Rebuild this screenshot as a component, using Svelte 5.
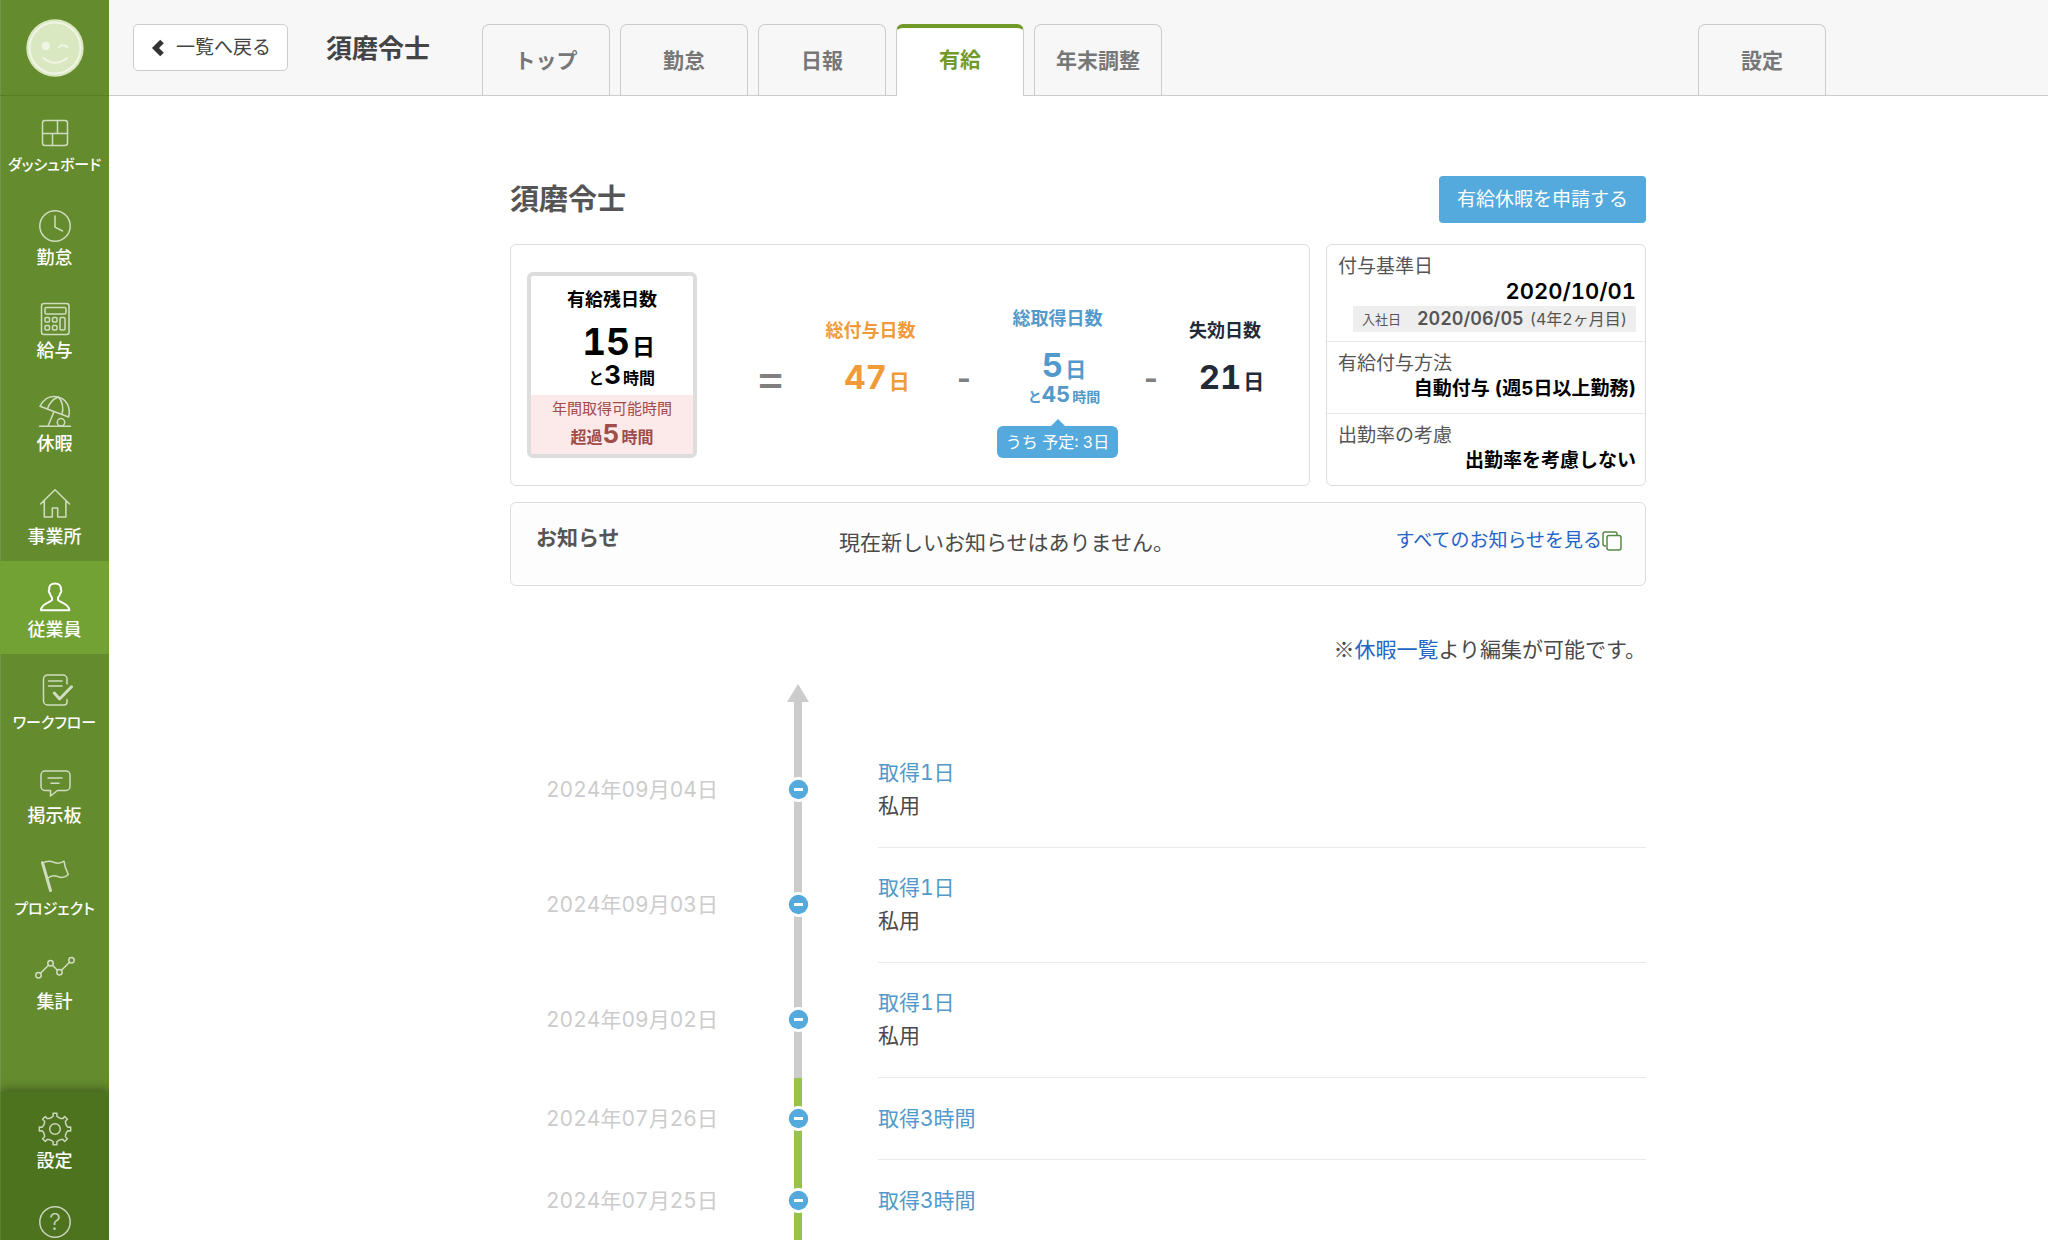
<script>
  const menu = [
    { id: 'dashboard', label: 'ダッシュボード', kana: true },
    { id: 'clock', label: '勤怠' },
    { id: 'calculator', label: '給与' },
    { id: 'parasol', label: '休暇' },
    { id: 'house', label: '事業所' },
    { id: 'person', label: '従業員', active: true },
    { id: 'workflow', label: 'ワークフロー', kana: true },
    { id: 'board', label: '掲示板' },
    { id: 'flag', label: 'プロジェクト', kana: true },
    { id: 'chart', label: '集計' }
  ];

  const tabs = [
    { label: 'トップ' },
    { label: '勤怠' },
    { label: '日報' },
    { label: '有給', active: true },
    { label: '年末調整' }
  ];

  const history = [
    { date: '2024年09月04日', text: '取得1日', note: '私用', tone: 'past' },
    { date: '2024年09月03日', text: '取得1日', note: '私用', tone: 'past' },
    { date: '2024年09月02日', text: '取得1日', note: '私用', tone: 'past' },
    { date: '2024年07月26日', text: '取得3時間', note: '', tone: 'current' },
    { date: '2024年07月25日', text: '取得3時間', note: '', tone: 'current' }
  ];

  // Outline of an eight-toothed gear centred on (20, 20).
  function gearPath() {
    const steps = [[-17, 12], [-8, 13], [-7, 15.8], [7, 15.8], [8, 13], [17, 12]];
    const points = [];
    for (let tooth = 0; tooth < 8; tooth++) {
      for (const [offset, radius] of steps) {
        const angle = ((tooth * 45 + offset) * Math.PI) / 180;
        points.push(`${(20 + radius * Math.sin(angle)).toFixed(2)} ${(20 - radius * Math.cos(angle)).toFixed(2)}`);
      }
    }
    return `M${points.join('L')}Z`;
  }
</script>

{#snippet icon(id)}
  <svg class="icon" viewBox="0 0 40 40" aria-hidden="true">
    {#if id === 'dashboard'}
      <rect x="7.5" y="7.5" width="25" height="25" rx="2.5" />
      <path d="M7.5 20.5H32.5M22.5 7.5V20.5M17.5 20.5V32.5" />
    {:else if id === 'clock'}
      <circle cx="20" cy="20" r="15.2" />
      <path d="M20 10V21.2L27.5 25" />
    {:else if id === 'calculator'}
      <rect x="6.5" y="4.5" width="27.5" height="31" rx="2.5" />
      <rect x="10" y="8.5" width="21" height="6.5" rx="1.5" />
      <rect x="10" y="18.5" width="4.5" height="4.5" rx="1" />
      <rect x="17.5" y="18.5" width="4.5" height="4.5" rx="1" />
      <rect x="10" y="26.5" width="4.5" height="4.5" rx="1" />
      <rect x="17.5" y="26.5" width="4.5" height="4.5" rx="1" />
      <rect x="25" y="18.5" width="5" height="12.5" rx="1" />
    {:else if id === 'parasol'}
      <path d="M5 14.3C9 6.5 15.5 3.2 23 5C32 7.2 36 16 33.6 25L5 14.3Z" />
      <path d="M23 5C18 7.3 14 11.5 12.5 17M23 5C27.5 8.5 28.8 16 27 22.4M19 19.6L13 34M4.5 34.3H35.5" />
      <circle cx="26" cy="30.3" r="3.7" />
    {:else if id === 'house'}
      <path d="M5.5 19L20 4.8L34.5 19M9.3 15.8V32H17.3V23H22.7V32H30.9V15.8" />
    {:else if id === 'person'}
      <path d="M20 5.5C15.6 5.5 14 8 14.2 11.5C13.4 12.5 13.8 14.8 14.9 15.4C15.3 17.5 16 18.6 17 19.6V22C15.5 24.6 6 25.3 6 32.2H34.3C34.3 25.3 24.6 24.6 23 22V19.6C24.1 18.6 24.8 17.5 25.2 15.4C26.3 14.8 26.7 12.5 25.9 11.5C26.1 8 24.4 5.5 20 5.5Z" />
    {:else if id === 'workflow'}
      <path d="M32 13V8a4 4 0 0 0-4-4H12.5a4 4 0 0 0-4 4V30a4 4 0 0 0 4 4H29a3 3 0 0 0 3-3V28.5M13.5 10H27M13.5 15H27" />
      <path class="thick" d="M19.3 22L24.6 28L36.5 15.8" />
    {:else if id === 'board'}
      <path d="M10 7H31a4 4 0 0 1 4 4V22.5a4 4 0 0 1-4 4H22.5L15.5 32V26.5H10a4 4 0 0 1-4-4V11a4 4 0 0 1 4-4ZM13 14H27M16 19.3H24" />
    {:else if id === 'flag'}
      <path d="M8 6C12 3 16 4 19.5 5.5C23 7 27 5.5 29 4.2C29.5 9 31.5 14 33.3 17.5C30.5 20.5 27 21.3 22.5 19.5C19 18 15.5 18.8 13 21" />
      <path class="thick" d="M7.5 5.8L15.5 33.5" />
    {:else if id === 'chart'}
      <path d="M5.5 23.3L13.5 15.3M17.5 15.3L22.5 20.3M26.5 20.3L34.5 12.3" />
      <circle cx="3.5" cy="25.3" r="2.7" />
      <circle cx="15.5" cy="13.3" r="2.7" />
      <circle cx="24.5" cy="22.3" r="2.7" />
      <circle cx="36.5" cy="10.3" r="2.7" />
    {:else if id === 'gear'}
      <path d={gearPath()} />
      <circle cx="20" cy="20" r="5.3" />
    {:else if id === 'help'}
      <circle cx="20" cy="20" r="15.2" />
      <text x="20" y="28" text-anchor="middle">?</text>
    {/if}
  </svg>
{/snippet}

<div class="shell">
  <nav class="sidebar" aria-label="メインメニュー">
    <a class="avatar" href="#profile" aria-label="プロフィール">
      <svg viewBox="0 0 58 58" aria-hidden="true">
        <circle cx="29" cy="29" r="28.7" fill="#dae8c1" />
        <circle cx="29" cy="29" r="25.5" fill="none" stroke="#f0f5e6" stroke-width="2" />
        <circle cx="19.8" cy="27" r="4.2" fill="#f0f5e6" />
        <path d="M33 28Q37 24.5 41.5 28M17.5 39Q29 48.5 41 39" fill="none" stroke="#f0f5e6" stroke-width="2" stroke-linecap="round" />
      </svg>
    </a>
    <div class="menu">
      {#each menu as item}
        <a class="item" class:active={item.active} class:kana={item.kana} href="#{item.id}">
          {@render icon(item.id)}
          <span>{item.label}</span>
        </a>
      {/each}
    </div>
    <div class="menu lower">
      <a class="item" href="#settings">
        {@render icon('gear')}
        <span>設定</span>
      </a>
      <a class="item" href="#help" aria-label="ヘルプ">
        {@render icon('help')}
      </a>
    </div>
  </nav>

  <div class="page">
    <header>
      <div class="bar">
        <button class="back" type="button">
          <svg viewBox="0 0 14 18" aria-hidden="true"><path d="M11 2.5L4.5 9L11 15.5" /></svg>
          一覧へ戻る
        </button>
        <strong class="who">須磨令士</strong>
        <nav class="tabs" aria-label="従業員メニュー">
          {#each tabs as tab}
            <a class="tab" class:active={tab.active} href="#{tab.label}">{tab.label}</a>
          {/each}
          <a class="tab last" href="#config">設定</a>
        </nav>
      </div>
    </header>

    <main>
      <div class="heading">
        <h1>須磨令士</h1>
        <button class="apply" type="button">有給休暇を申請する</button>
      </div>

      <div class="cards">
        <section class="card balance">
          <div class="remain">
            <h2>有給残日数</h2>
            <div class="figures">
              <p class="days"><b>15</b>日</p>
              <p class="hours">と<b>3</b>時間</p>
            </div>
            <div class="over">
              <p>年間取得可能時間</p>
              <p class="hours">超過<b>5</b>時間</p>
            </div>
          </div>
          <span class="sign equals">=</span>
          <div class="term granted">
            <h2>総付与日数</h2>
            <p class="amount"><b>47</b>日</p>
          </div>
          <span class="sign">-</span>
          <div class="term taken">
            <h2>総取得日数</h2>
            <p class="amount"><b>5</b>日</p>
            <p class="extra">と<b>45</b>時間</p>
            <p class="planned">うち 予定: 3日</p>
          </div>
          <span class="sign">-</span>
          <div class="term expired">
            <h2>失効日数</h2>
            <p class="amount"><b>21</b>日</p>
          </div>
        </section>

        <dl class="card rules">
          <div>
            <dt>付与基準日</dt>
            <dd class="base">2020/10/01</dd>
            <dd class="joined"><small>入社日</small><b>2020/06/05</b><span>(4年2ヶ月目)</span></dd>
          </div>
          <div>
            <dt>有給付与方法</dt>
            <dd>自動付与 (週5日以上勤務)</dd>
          </div>
          <div>
            <dt>出勤率の考慮</dt>
            <dd>出勤率を考慮しない</dd>
          </div>
        </dl>
      </div>

      <section class="card notice">
        <h2>お知らせ</h2>
        <p>現在新しいお知らせはありません。</p>
        <a href="#notices">
          すべてのお知らせを見る<svg viewBox="0 0 20 20" aria-hidden="true">
            <path d="M4 15H3a2 2 0 0 1-2-2V3a2 2 0 0 1 2-2H13a2 2 0 0 1 2 2V4" />
            <rect x="5" y="4.5" width="14" height="14.5" rx="2" />
          </svg>
        </a>
      </section>

      <p class="hint">※<a href="#leaves">休暇一覧</a>より編集が可能です。</p>

      <div class="timeline">
        <svg class="arrow" viewBox="0 0 22 49" aria-hidden="true"><path d="M11 0L22 18H15V49H7V18H0Z" /></svg>
        <ol>
          {#each history as entry}
            <li>
              <time>{entry.date}</time>
              <span class="track {entry.tone}">
                <svg viewBox="0 0 25 25" aria-hidden="true">
                  <circle cx="12.5" cy="12.5" r="12.5" fill="#fff" />
                  <circle cx="12.5" cy="12.5" r="9.7" fill="#54aadd" />
                  <path d="M8 12.5H17" stroke="#fff" stroke-width="3" />
                </svg>
              </span>
              <div class="entry">
                <a href="#entry">{entry.text}</a>
                {#if entry.note}<p>{entry.note}</p>{/if}
              </div>
            </li>
          {/each}
        </ol>
      </div>
    </main>
  </div>
</div>

<style>
  :global(body) {
    margin: 0;
    background: #fff;
  }

  .shell,
  .shell * {
    box-sizing: border-box;
  }

  .shell {
    display: flex;
    height: 100vh;
    overflow: hidden;
    color: #4a4a4a;
    font-family: Inter, "Noto Sans CJK JP", sans-serif;
    font-size: 21px;
    font-variant-numeric: tabular-nums;
  }

  h1,
  h2,
  p,
  dl,
  dd,
  ol {
    margin: 0;
    padding: 0;
  }

  a {
    text-decoration: none;
  }

  b {
    font-weight: 700;
    line-height: 0;
  }

  button {
    font-family: inherit;
    cursor: pointer;
  }

  /* Sidebar */
  .sidebar {
    display: flex;
    flex: none;
    flex-direction: column;
    width: 109px;
    overflow: hidden;
    background: #648c2e;
    box-shadow: inset 1px 0 #709745;
  }

  .avatar {
    display: flex;
    flex: none;
    align-items: center;
    justify-content: center;
    height: 96px;
    padding-top: 1px;
    border-bottom: 1px solid #587f26;
  }

  .avatar svg {
    width: 58px;
    height: 58px;
  }

  .menu {
    flex: 1;
    min-height: 0;
    overflow: hidden;
  }

  .lower {
    flex: 0 0 148px;
    background: #4d731f;
    box-shadow: 0 -2px 10px rgba(0, 0, 0, 0.4), inset 1px 0 #5d8033;
  }

  .item {
    display: flex;
    flex-direction: column;
    align-items: center;
    height: 93px;
    padding-top: 17px;
    color: #fff;
    font-size: 18px;
    font-weight: 500;
    line-height: 24px;
    white-space: nowrap;
    font-feature-settings: "palt";
  }

  .item.kana {
    font-size: 15px;
  }

  .item.active {
    background: #72a233;
  }

  .icon {
    flex: none;
    width: 40px;
    height: 40px;
    overflow: visible;
    fill: none;
    stroke: #fff;
    stroke-width: 1.5;
    stroke-linecap: round;
    stroke-linejoin: round;
    opacity: 0.7;
  }

  .active .icon {
    stroke-width: 2;
    opacity: 1;
  }

  .icon .thick {
    stroke-width: 3;
  }

  .icon text {
    fill: #fff;
    stroke: none;
    font-size: 23px;
    font-weight: 300;
  }

  /* Header */
  .page {
    flex: 1;
    min-width: 0;
  }

  header {
    height: 96px;
    border-bottom: 1px solid #ccc;
    background: #f7f7f7;
  }

  .bar {
    display: flex;
    max-width: 1717px;
    padding: 24px 0 0 24px;
  }

  .back {
    display: flex;
    flex: none;
    gap: 11px;
    align-items: center;
    height: 47px;
    padding: 0 16px 0 17px;
    border: 1px solid #ccc;
    border-radius: 5px;
    background: #fff;
    color: #444;
    font-size: 19px;
    line-height: 24px;
  }

  .back svg {
    width: 14px;
    height: 18px;
    fill: none;
    stroke: #333;
    stroke-width: 5;
  }

  .who {
    flex: none;
    width: 156px;
    margin-left: 38px;
    color: #444;
    font-size: 26px;
    line-height: 49px;
  }

  .tabs {
    display: flex;
    flex: 1;
    gap: 10px;
  }

  .tab {
    width: 128px;
    height: 71px;
    padding-top: 20px;
    border: 1px solid #ccc;
    border-bottom: 0;
    border-radius: 7px 7px 0 0;
    color: #777;
    font-weight: 700;
    line-height: 32px;
    text-align: center;
  }

  .tab.active {
    height: 72px;
    padding-top: 16px;
    border-top: 4px solid #729a2a;
    background: #fff;
    color: #729a2a;
  }

  .tab.last {
    margin-left: auto;
  }

  /* Content */
  main {
    max-width: 1137px;
    margin: 0 auto;
    padding: 80px 1px 0 0;
  }

  .heading {
    display: flex;
    align-items: center;
    justify-content: space-between;
    margin-bottom: 21px;
  }

  h1 {
    color: #555;
    font-size: 29px;
    line-height: 40px;
  }

  .apply {
    height: 47px;
    padding: 0 18px;
    border: 0;
    border-radius: 4px;
    background: #54aadd;
    color: #fff;
    font-size: 19px;
    line-height: 24px;
  }

  .card {
    border: 1px solid #ddd;
    border-radius: 6px;
  }

  .cards {
    display: grid;
    grid-template-columns: 5fr 2fr;
    gap: 16px;
  }

  .balance {
    display: grid;
    grid-template-columns: 170px 113fr 121fr 66fr 121fr 66fr 82fr;
    align-items: start;
    padding: 27px 43px 27px 16px;
  }

  h2 {
    font-size: 18px;
    line-height: 24px;
    white-space: nowrap;
  }

  .remain {
    border: 4px solid #ddd;
    border-radius: 6px;
    color: #000;
    font-weight: 700;
    text-align: center;
  }

  .remain h2 {
    padding-top: 12px;
  }

  .figures {
    padding: 15px 38px 6px 0;
    text-align: right;
  }

  .days {
    font-size: 23px;
    line-height: 40px;
  }

  .days b {
    margin-right: 2px;
    font-size: 37px;
  }

  .hours {
    font-size: 16px;
    line-height: 22px;
    white-space: nowrap;
  }

  .hours b {
    margin-right: 2px;
    font-size: 26px;
  }

  .over {
    padding-top: 3px;
    background: #fce9e9;
    color: #a04c48;
    font-size: 15px;
    font-weight: 400;
    line-height: 22px;
  }

  .over .hours {
    font-weight: 700;
    line-height: 34px;
  }

  .sign {
    padding-top: 82px;
    color: #808080;
    font-size: 30px;
    font-weight: 700;
    line-height: 48px;
    text-align: center;
  }

  .equals {
    padding-left: 34px;
    font-size: 48px;
    font-weight: 400;
  }

  .term {
    padding-top: 47px;
    font-weight: 700;
    text-align: center;
  }

  .amount {
    padding: 22px 0 0 13px;
    font-size: 21px;
    line-height: 34px;
  }

  .amount b {
    margin-right: 2px;
    font-size: 33px;
  }

  .granted {
    color: #f19b38;
  }

  .expired {
    color: #222a38;
  }

  .taken {
    padding-top: 35px;
    color: #5399ca;
  }

  .extra {
    padding-left: 13px;
    font-size: 14px;
    line-height: 20px;
  }

  .extra b {
    margin-right: 2px;
    font-size: 22px;
  }

  .planned {
    position: relative;
    margin-top: 19px;
    border-radius: 6px;
    background: #54aadd;
    color: #fff;
    font-size: 16px;
    font-weight: 400;
    line-height: 32px;
    white-space: nowrap;
  }

  .planned::before {
    position: absolute;
    top: -7px;
    left: calc(50% - 7px);
    border: 7px solid transparent;
    border-top: 0;
    border-bottom-color: #54aadd;
    content: "";
  }

  .rules > div {
    padding: 9px 9px 12px 11px;
    border-bottom: 1px solid #e8e8e8;
  }

  .rules > div:first-child {
    padding-bottom: 9px;
  }

  .rules > div:last-child {
    border-bottom: 0;
  }

  dt {
    color: #555;
    font-size: 19px;
    line-height: 25px;
  }

  dd {
    color: #000;
    font-size: 19px;
    font-weight: 700;
    line-height: 25px;
    text-align: right;
    white-space: nowrap;
  }

  .base {
    font-size: 22px;
    font-weight: 600;
  }

  .joined {
    display: flex;
    gap: 6px;
    align-items: center;
    width: fit-content;
    margin: 2px 0 0 auto;
    padding: 0 9px;
    background: #eee;
    color: #555;
    font-size: 16px;
    font-weight: 400;
    line-height: 26px;
  }

  .joined b {
    font-size: 18px;
    font-weight: 600;
  }

  .joined small {
    margin-right: 10px;
    font-size: 13px;
  }

  .notice {
    display: flex;
    align-items: flex-start;
    height: 84px;
    margin-top: 16px;
    padding: 20px 23px 0 25px;
    background: #fdfdfd;
  }

  .notice h2 {
    width: 303px;
    color: #555;
    font-size: 21px;
    line-height: 30px;
  }

  .notice p {
    flex: 1;
    padding-top: 5px;
    line-height: 30px;
  }

  .notice a {
    display: flex;
    align-items: center;
    padding-top: 3px;
    font-size: 19px;
    line-height: 30px;
  }

  .notice a,
  .hint a {
    color: #2464c4;
  }

  .notice svg {
    width: 20px;
    height: 20px;
    fill: none;
    stroke: #568a45;
    stroke-width: 1.5;
  }

  .hint {
    margin-top: 46px;
    font-family: "Noto Sans CJK JP", sans-serif;
    line-height: 32px;
    text-align: right;
  }

  /* Timeline */
  .arrow {
    display: block;
    width: 22px;
    height: 49px;
    margin: 20px 0 0 277px;
    fill: #ccc;
  }

  ol {
    list-style: none;
  }

  li {
    display: grid;
    grid-template-columns: 284px 8px 1fr;
  }

  time {
    align-self: center;
    padding: 0 0 1px 36px;
    color: #ccc;
    line-height: 34px;
  }

  .track {
    display: flex;
    align-items: center;
    justify-content: center;
    padding-bottom: 2px;
    background: #ccc;
  }

  .track.current {
    background: #99c24b;
  }

  .track svg {
    flex: none;
    width: 25px;
    height: 25px;
  }

  .entry {
    margin-left: 76px;
    padding: 23px 0 25px;
    border-bottom: 1px solid #eaeaea;
    line-height: 33px;
  }

  .current + .entry {
    padding: 24px 0;
  }

  .entry a {
    color: #5399ca;
  }
</style>
